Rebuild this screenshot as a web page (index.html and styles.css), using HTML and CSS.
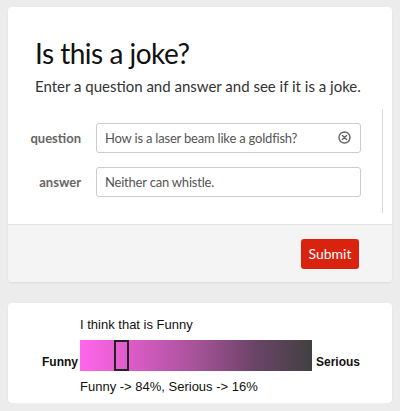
FILE: index.html
```html
<!DOCTYPE html>
<html>
<head>
<meta charset="utf-8">
<link rel="stylesheet" href="styles.css">
</head>
<body>
<div class="card joke-card">
  <div class="card-body">
    <h1 class="title">Is this a joke?</h1>
    <p class="lead">Enter a question and answer and see if it is a joke.</p>
    <div class="form-wrap">
      <div class="form-grid">
        <label class="field-label">question</label>
        <div class="input">
          <span>How is a laser beam like a goldfish?</span>
          <svg class="clear" width="13" height="13" viewBox="0 0 13 13"><circle cx="6.5" cy="6.5" r="5.5" fill="none" stroke="#666" stroke-width="1.4"/><path d="M4.4 4.4 L8.6 8.6 M8.6 4.4 L4.4 8.6" stroke="#666" stroke-width="1.4" stroke-linecap="round"/></svg>
        </div>
        <label class="field-label">answer</label>
        <div class="input"><span>Neither can whistle.</span></div>
      </div>
    </div>
  </div>
  <div class="card-footer">
    <button class="btn-submit">Submit</button>
  </div>
</div>
<div class="card result-card">
  <div class="meter">
    <div class="meter-caption">I think that is Funny</div>
    <div class="meter-end left">Funny</div>
    <div class="meter-bar"><div class="marker"></div></div>
    <div class="meter-end right">Serious</div>
    <div class="meter-result">Funny -&gt; 84%, Serious -&gt; 16%</div>
  </div>
</div>
</body>
</html>
```
FILE: styles.css
```css
html, body { margin: 0; padding: 0; }
body {
  background: #ececec;
  padding: 7px 8px 0 8px;
  font-family: Lato, "Open Sans", sans-serif;
  color: #111;
}
.card {
  background: #fff;
  border-radius: 4px;
  box-shadow: 0 1px 2px rgba(0,0,0,0.08);
}
.joke-card { height: 275px; display: flex; flex-direction: column; overflow: hidden; }
.card-body { padding: 26px 10px 0 27px; flex: 1; }
.title {
  margin: 0;
  font-size: 28px;
  letter-spacing: -0.5px;
  font-weight: 400;
  line-height: 40px;
  color: #111;
}
.lead {
  margin: 3px 0 0 0;
  font-size: 15px;
  line-height: 20px;
  color: #333;
  white-space: nowrap;
}
.form-wrap {
  margin-top: 13px;
  width: 374px;
  margin-left: -27px;
  border-right: 1px solid #d8d8d8;
  padding: 14px 0 16px 0;
}
.form-grid {
  display: grid;
  grid-template-columns: 73px 265px;
  column-gap: 15px;
  row-gap: 14px;
  align-items: center;
}
.field-label {
  text-align: right;
  font-size: 13px;
  font-weight: 700;
  color: #666;
}
.input {
  height: 28px;
  border: 1px solid #ccc;
  border-radius: 3px;
  display: flex;
  align-items: center;
  justify-content: space-between;
  padding: 0 9px 0 8px;
  font-size: 13px;
  letter-spacing: -0.2px;
  color: #555;
}
.clear { margin-top: -2px; }
.card-footer {
  height: 57px;
  border-top: 1px solid #e2e2e2;
  background: #f4f4f4;
  display: flex;
  align-items: center;
  justify-content: flex-end;
  padding-right: 33px;
}
.btn-submit {
  width: 58px;
  height: 30px;
  border: none;
  border-radius: 3px;
  background: #d9230f;
  color: #fff;
  font-family: Lato, "Open Sans", sans-serif;
  font-size: 14px;
  padding: 0;
}
.result-card {
  margin-top: 21px;
  height: 100px;
  box-sizing: border-box;
  padding: 14px 0 0 34px;
}
.meter {
  display: grid;
  grid-template-columns: 34px 232px auto;
  column-gap: 4px;
  font-family: "Liberation Sans", Arial, sans-serif;
  font-size: 13px;
  color: #111;
}
.meter-caption { grid-column: 2 / 4; grid-row: 1; line-height: 15px; margin-bottom: 8px; }
.meter-end { grid-row: 2; align-self: end; font-weight: 700; font-size: 12px; line-height: 15px; margin-bottom: 1px; }
.meter-end.left { grid-column: 1; text-align: right; }
.meter-end.right { grid-column: 3; }
.meter-bar {
  grid-column: 2; grid-row: 2;
  height: 31px;
  background: linear-gradient(to right, #ff66ea 0%, #e05ccc 20%, #a65399 50%, #6c4468 75%, #414141 100%);
  position: relative;
}
.marker {
  position: absolute;
  left: 34px; top: 0;
  width: 11px; height: 27px;
  border: 2px solid #222;
}
.meter-result { grid-column: 2 / 4; grid-row: 3; line-height: 15px; margin-top: 8px; }
```
